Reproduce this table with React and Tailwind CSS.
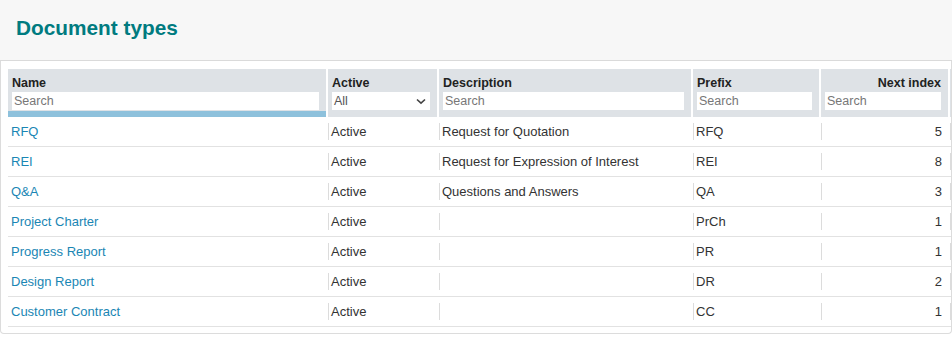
import React from 'react';

const rows = [
  { name: 'RFQ', active: 'Active', description: 'Request for Quotation', prefix: 'RFQ', next: 5 },
  { name: 'REI', active: 'Active', description: 'Request for Expression of Interest', prefix: 'REI', next: 8 },
  { name: 'Q&A', active: 'Active', description: 'Questions and Answers', prefix: 'QA', next: 3 },
  { name: 'Project Charter', active: 'Active', description: '', prefix: 'PrCh', next: 1 },
  { name: 'Progress Report', active: 'Active', description: '', prefix: 'PR', next: 1 },
  { name: 'Design Report', active: 'Active', description: '', prefix: 'DR', next: 2 },
  { name: 'Customer Contract', active: 'Active', description: '', prefix: 'CC', next: 1 },
];

const cols = 'grid grid-cols-[320px_111px_254px_128px_129px_1fr]';

function SearchBox() {
  return (
    <input
      type="text"
      placeholder="Search"
      className="block w-full h-[18px] bg-white outline-none pl-[2px] text-[12.5px] text-[#333] placeholder:text-[#777]"
    />
  );
}

function HeadCell({ label, right, children, bar }) {
  return (
    <div className="flex flex-col bg-[#dee2e6] border-r-2 border-white">
      <div className={`pl-1 pr-[7px] pt-[7px] ${right ? 'text-right' : ''}`}>
        <div className="text-[12.5px] leading-[15px] font-bold text-[#222]">{label}</div>
        <div className="mt-px">{children}</div>
      </div>
      {bar ? <div className="mt-px h-[6px] bg-[#8ec1dc]" /> : null}
    </div>
  );
}

function Cell({ children, right }) {
  return (
    <div className="flex items-center">
      <div className={`flex-1 h-[17px] flex items-center border-l border-[#dcdcdc] pl-[2px] ${right ? 'justify-end pr-[8px]' : ''}`}>
        {children}
      </div>
    </div>
  );
}

export default function App() {
  return (
    <div className="w-[952px] h-[337px] overflow-hidden bg-white font-['Liberation_Sans',Arial,sans-serif]">
      <div className="h-[61px] bg-[#f7f7f7] border-b border-[#dadada] pl-4 pt-4">
        <h1 className="text-[20.8px] leading-[24px] font-bold text-[#007b80]">Document types</h1>
      </div>

      <div className="border-x border-b border-[#dcdcdc] rounded-b-[4px] pl-[7px] pt-2 pb-[6px]">
        <div className={`${cols} h-[48px]`}>
          <HeadCell label="Name" bar>
            <SearchBox />
          </HeadCell>
          <HeadCell label="Active">
            <div className="h-[18px] bg-white flex items-center justify-between pl-[2px] pr-[4px] text-[12.5px] text-[#555]">
              <span>All</span>
              <svg width="10" height="7" viewBox="0 0 10 7" fill="none">
                <path d="M1 1.5 L5 5.2 L9 1.5" stroke="#444" strokeWidth="1.6" />
              </svg>
            </div>
          </HeadCell>
          <HeadCell label="Description">
            <SearchBox />
          </HeadCell>
          <HeadCell label="Prefix">
            <SearchBox />
          </HeadCell>
          <HeadCell label="Next index" right>
            <SearchBox />
          </HeadCell>
          <div className="bg-[#dee2e6]" />
        </div>

        {rows.map(r => (
          <div key={r.name} className={`${cols} h-[30px] border-b border-[#e2e2e2] text-[13px] text-[#333]`}>
            <div className="flex items-center pl-[3px]">
              <a href="#" className="text-[#1a86b4]">{r.name}</a>
            </div>
            <Cell>{r.active}</Cell>
            <Cell>{r.description}</Cell>
            <Cell>{r.prefix}</Cell>
            <Cell right>{r.next}</Cell>
            <Cell />
          </div>
        ))}
      </div>
    </div>
  );
}
